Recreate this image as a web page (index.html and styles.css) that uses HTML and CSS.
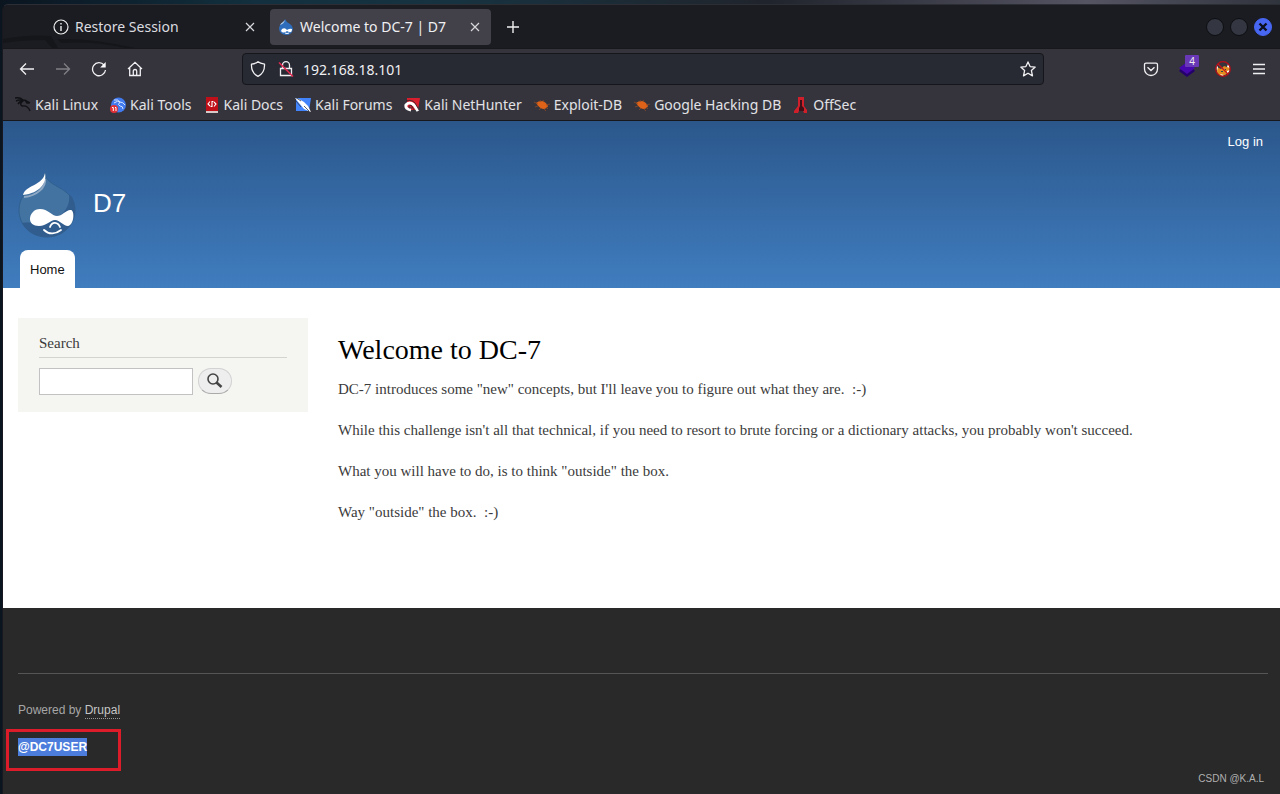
FILE: index.html
```html
<!DOCTYPE html>
<html lang="en">
<head>
<meta charset="utf-8">
<title>Welcome to DC-7 | D7</title>
<link rel="stylesheet" href="styles.css">
</head>
<body>
<svg width="0" height="0" class="defs" aria-hidden="true">
  <symbol id="drop" viewBox="0 0 58 66">
    <path d="M27 0C28 10 39 12 48 19C55 25 57 31 57 37C57 53 44 64 29 64C13 64 1 52 1 37C1 25 8 18 17 13C23 9 26 5 27 0Z" fill="#4373a1" stroke="#31608f"/>
    <path d="M51 21C53 36 42 46 28 48C18 50 8 49 4 50C9 59 18 64 29 64C44 64 57 53 57 37C57 30 55 24 51 21Z" fill="#315d8e"/>
    <path d="M27 6C28 14 19 23 6 24" fill="none" stroke="#8fa9c5" stroke-width="2"/>
    <path d="M27 0C29 10 22 20 5 22C6 17 12 14 18 11C23 8 26 5 27 0Z" fill="#fff"/>
    <path d="M22 36C30 36 34 43 39 43C44 43 49 36 53 37C57 38 56 52 50 53C45 53 42 47 37 47C32 47 29 53 21 53C15 53 12 50 12 46C12 41 16 36 22 36Z" fill="#fff"/>
    <path d="M32 54C34 48 40 49 42 54M26 57C31 62 38 61 43 57" fill="none" stroke="#fff" stroke-width="1.800" stroke-linecap="round"/>
  </symbol>
  <symbol id="close" viewBox="0 0 10 10"><path d="M1 1l8 8M9 1L1 9" fill="none" stroke="#d8d8dc" stroke-width="1.2"/></symbol>
  <symbol id="dragon" viewBox="0 0 16 16"><path d="M0 1Q5 0 8 3Q11 3 13 5L15 6M1 4Q5 2 8 4M3 7Q5 4 8 4Q4 7 7 9Q13 8 15 14M10 3L12 6L14 6" fill="none" stroke="currentColor" stroke-width="1.400"/></symbol>
  <symbol id="bug" viewBox="0 0 16 16"><path d="M2 6Q4 4 8 4Q12 5 14 9Q13 12 9 12Q5 11 2 6Z" fill="#df6219"/><path d="M4 7L0 5M4 9L1 10M7 5L6 3M10 5L9 3M7 11L5 13M10 12L12 14M12 8L16 7M12 10L14 12" stroke="#8c4a25" stroke-width=".8"/></symbol>
</svg>
<div class="desktop">
<div class="window">
  <div class="tabs">
    <svg class="emblem" width="150" height="14" viewBox="0 0 150 14" aria-hidden="true"><path d="M0 5Q25 0 48 2L55 14H49L42 6Q20 6 0 9ZM54 5Q90 4 132 14H122Q90 7 58 9Z" fill="#15161a"/></svg>
    <div class="tab">
      <svg width="16" height="16" viewBox="0 0 16 16"><circle cx="8" cy="8" r="7" fill="none" stroke="#eee" stroke-width="1.2"/><path d="M8 7v5M8 4v1.6" stroke="#eee" stroke-width="1.4"/></svg>
      <span class="tab-name">Restore Session</span>
      <button class="icon-btn small" aria-label="Close Restore Session"><svg width="10" height="10"><use href="#close"/></svg></button>
    </div>
    <div class="tab active">
      <svg width="16" height="16" viewBox="0 0 16 16"><path d="M7 0Q8 3 12 5Q15 7 15 10Q14 16 8 16Q1 15 1 9Q1 6 4 4Q7 2 7 0Z" fill="#2d6dbc"/><path d="M7 1Q6 5 2 6Q3 4 5 3Z" fill="#b5d4ef"/><path d="M4 10Q7 8 9 11Q12 9 14 10Q14 14 11 13L9 12Q5 15 3 12Z" fill="#fff"/><path d="M7 14Q9 15 11 14" stroke="#fff" fill="none"/></svg>
      <span class="tab-name">Welcome to DC-7 | D7</span>
      <button class="icon-btn small" aria-label="Close Welcome to DC-7"><svg width="10" height="10"><use href="#close"/></svg></button>
    </div>
    <button class="icon-btn" aria-label="New tab"><svg width="14" height="14" viewBox="0 0 14 14"><path d="M7 1v12M1 7h12" stroke="#f0f0f0" stroke-width="1.4"/></svg></button>
    <div class="controls">
      <button class="dot" aria-label="Minimize"></button>
      <button class="dot" aria-label="Maximize"></button>
      <button class="dot quit" aria-label="Close window"><svg width="10" height="10" viewBox="0 0 10 10"><path d="M1.500 1.500l7 7M8.500 1.500l-7 7" stroke="#0c0f1c" stroke-width="2.400"/></svg></button>
    </div>
  </div>
  <div class="toolbar">
    <div class="nav">
      <button class="icon-btn" aria-label="Back"><svg width="16" height="16" viewBox="0 0 16 16"><path d="M15 8H1.500M7 2.500L1.500 8L7 13.500" class="line"/></svg></button>
      <button class="icon-btn faded" aria-label="Forward"><svg width="16" height="16" viewBox="0 0 16 16"><path d="M1 8h13.500M9 2.500L14.500 8L9 13.500" class="line"/></svg></button>
      <button class="icon-btn" aria-label="Reload"><svg width="16" height="16" viewBox="0 0 16 16"><path d="M13 4A6.500 6.500 0 1 0 14.500 9" class="line"/><path d="M14.700 1v5.500H9.200Z" fill="#fbfbfe"/></svg></button>
      <button class="icon-btn" aria-label="Home"><svg width="16" height="16" viewBox="0 0 16 16"><path d="M1 8L8 1.300L15 8M2.700 7v7.500h10.600V7M6.300 14.500V10q0-1.500 1.700-1.500T9.700 10v4.500" class="line"/></svg></button>
    </div>
    <div class="url">
      <svg width="16" height="16" viewBox="0 0 16 16"><path d="M8 .8Q10 2.500 14.500 3.200Q15 12 8 15.400Q1 12 1.500 3.200Q6 2.500 8 .8Z" class="line"/></svg>
      <svg class="lock" width="16" height="16" viewBox="0 0 16 16"><path d="M4.500 7V4.200a3.500 3.500 0 0 1 7 0V7M2.500 7.500h11v7h-11Z" class="line"/><path d="M1 1.500l14 14" stroke="#e22850" stroke-width="1.500"/></svg>
      <input type="text" aria-label="Address" value="192.168.18.101">
      <button class="icon-btn" aria-label="Bookmark this page"><svg width="16" height="16" viewBox="0 0 16 16"><path d="M8 .9l2.100 4.700 5.100.5-3.800 3.500 1.100 5.300L8 12.200l-4.500 2.700 1.100-5.300L.8 6.100l5.100-.5Z" class="line" stroke-linejoin="round"/></svg></button>
    </div>
    <div class="tools">
      <button class="icon-btn" aria-label="Pocket"><svg width="16" height="16" viewBox="0 0 16 16"><path d="M3 2.200h10q1.500 0 1.500 1.500V8A6.500 6.500 0 0 1 1.500 8V3.700q0-1.500 1.500-1.500ZM4.500 6.200L8 9.500l3.500-3.300" class="line"/></svg></button>
      <button class="icon-btn" aria-label="Wappalyzer, 4"><svg width="16" height="16" viewBox="0 0 16 16"><path d="M0 10l8 6 8-6-2-2H2Z" fill="#25006b"/><path d="M8 1l8 6-8 6-8-6Z" fill="#4608ad"/></svg><span class="badge">4</span></button>
      <button class="icon-btn" aria-label="FoxyProxy"><svg width="16" height="16" viewBox="0 0 16 16"><path d="M2 6l4 2 3-3 3 1 3 0-1 5-4 3-5 1-3-4Z" fill="#e28b1e"/><path d="M1 4l2 2-1 4zM13 3l2 4-3-1zM5 13l4 1-2 1zM12 10l3-1-3 4z" fill="#fff"/><path d="M6 10h2v1H6zM10 8h1v1h-1z" fill="#304650"/><circle cx="8" cy="8" r="7.300" fill="none" stroke="#b80d19" stroke-width="1.200"/><path d="M3 3l10 10" stroke="#c9141d" stroke-width="1.200"/></svg></button>
      <button class="icon-btn" aria-label="Menu"><svg width="16" height="16" viewBox="0 0 16 16"><path d="M2 3.500h12M2 8h12M2 12.500h12" class="line"/></svg></button>
    </div>
  </div>
  <nav class="bookmarks" aria-label="Bookmarks">
    <a href="#"><svg class="black" width="16" height="16"><use href="#dragon"/></svg>Kali Linux</a>
    <a href="#"><svg width="16" height="16" viewBox="0 0 16 16"><circle cx="8.500" cy="8" r="7.500" fill="#4179ee"/><path d="M4 3Q8 2 10 5Q13 5 15 8M4 6Q8 3 10 5Q7 8 10 9Q13 9 13 12" fill="none" stroke="#d5e5ff"/><circle cx="4" cy="12" r="4" fill="#df3037"/><path d="M2 10.500h1.300v3.500M5 10.500h1v3.500" fill="none" stroke="#fff"/></svg>Kali Tools</a>
    <a href="#"><svg width="16" height="16" viewBox="0 0 16 16"><path d="M2 0h12v14H2Z" fill="#bf1019"/><path d="M2 14h12v2H2Z" fill="#d8c9c9"/><path d="M6 4.500L4 7l2 2M10 5l2 2-2 2.500M9.500 4.500H8v2.500v2.500H6.500" fill="none" stroke="#fff" stroke-width="1.100"/></svg>Kali Docs</a>
    <a href="#"><svg width="16" height="16" viewBox="0 0 16 16"><path d="M1 1h15l-2 13H1Z" fill="#4284fb"/><path d="M0 1l4 1 5 3 4 4 3 6-7-3-5-6Z" fill="#fff"/><path d="M0 0l6 4M9 9l5 5M1 4l5 6" stroke="#30394c" stroke-width=".8"/></svg>Kali Forums</a>
    <a href="#"><svg width="16" height="16" viewBox="0 0 16 16"><path d="M3 1h13l-2 12H3Z" fill="#d91f2d"/><path d="M14 14L10 8Q5 4 2 8Q1 12 7 13" fill="none" stroke="#fff" stroke-width="3"/><path d="M2 4Q8 2 11 6l4 7M8 11L5 11Q4 9 7 8l3 5" fill="none" stroke="#27252b" stroke-width=".8"/></svg>Kali NetHunter</a>
    <a href="#"><svg width="16" height="16"><use href="#bug"/></svg>Exploit-DB</a>
    <a href="#"><svg width="16" height="16"><use href="#bug"/></svg>Google Hacking DB</a>
    <a href="#"><svg width="16" height="16" viewBox="0 0 16 16"><path d="M5 0h6v9l3 4v3h-3l-1-2H6l-1 2H1v-2l4-5Z" fill="#cf1f2b"/><path d="M7 3h2v6l2 2v3H6v-3l1-2Z" fill="#3e1118"/></svg>OffSec</a>
  </nav>
  <div class="page">
    <header class="header">
      <a class="login" href="#">Log in</a>
      <div class="brand">
        <svg width="58" height="66" aria-label="Drupal"><use href="#drop"/></svg>
        <a href="#">D7</a>
      </div>
      <nav class="menu"><a href="#">Home</a></nav>
    </header>
    <div class="main">
      <aside class="sidebar">
        <h2><label for="q">Search</label></h2>
        <form class="search">
          <input id="q" type="search">
          <button type="button" aria-label="Search"><svg width="16" height="16" viewBox="0 0 16 16"><circle cx="6" cy="6" r="5" fill="none" stroke="#444" stroke-width="1.600"/><path d="M9.500 9.500L14.500 14" stroke="#444" stroke-width="2.600"/></svg></button>
        </form>
      </aside>
      <main class="content">
        <h1>Welcome to DC-7</h1>
        <p>DC-7 introduces some "new" concepts, but I'll leave you to figure out what they are.&nbsp; :-)</p>
        <p>While this challenge isn't all that technical, if you need to resort to brute forcing or a dictionary attacks, you probably won't succeed.</p>
        <p>What you will have to do, is to think "outside" the box.</p>
        <p>Way "outside" the box.&nbsp; :-)</p>
      </main>
    </div>
    <footer class="footer">
      <p class="powered">Powered by <a href="#">Drupal</a></p>
      <div class="user"><span class="selected">@DC7USER</span><i class="frame"></i></div>
      <span class="credit">CSDN @K.A.L</span>
    </footer>
  </div>
</div>
</div>
</body>
</html>
```
FILE: styles.css
```css
* { box-sizing: border-box; }
body { margin: 0; }
h1, h2, p { margin: 0; font-weight: normal; }
button, input { font: inherit; color: inherit; }
svg { display: block; flex: none; }
.defs { position: absolute; }

.desktop {
  min-height: 100vh;
  display: flex;
  padding: 4px 0 0 2px;
  background: linear-gradient(90deg, #0a1520 0, #12303f 20%, #173341 35%, #20242c 60%, #555463 85%, #30343d 100%);
}
.window {
  flex: 1;
  min-width: 0;
  display: flex;
  flex-direction: column;
  border-top: 1px solid #2c2e35;
  border-left: 1px solid #171820;
  border-top-left-radius: 6px;
  overflow: hidden;
  background: #1c1b22;
}

/* Browser frame */
.tabs, .toolbar, .bookmarks {
  display: flex;
  align-items: center;
  color: #f0f0f3;
  font-family: "Noto Sans", sans-serif;
  font-size: 14px;
}
.tabs {
  position: relative;
  height: 44px;
  padding: 0 8px 0 37px;
  background: #1b1c21;
  border-bottom: 1px solid #17181b;
}
.emblem { position: absolute; left: 0; bottom: 0; }
.tab {
  position: relative;
  display: flex;
  align-items: center;
  gap: 6px;
  width: 230px;
  height: 36px;
  padding: 0 12px 0 13px;
  color: #dcdce0;
}
.tab.active {
  width: 221px;
  padding: 0 8px;
  border-radius: 4px;
  background: #42414a;
  color: #f0f0f3;
}
.tab-name { flex: 1; white-space: nowrap; }
.icon-btn {
  position: relative;
  display: grid;
  place-items: center;
  width: 36px;
  height: 32px;
  padding: 0;
  border: 0;
  background: none;
}
.icon-btn.small { width: 16px; height: 16px; }
.tabs > .icon-btn { margin-left: 4px; }
.faded { opacity: .4; }
.line { fill: none; stroke: #f0f0f3; stroke-width: 1.3; }
.controls { display: flex; gap: 6px; margin-left: auto; }
.dot {
  display: grid;
  place-items: center;
  width: 18px;
  height: 18px;
  padding: 0;
  border: 1px solid #0d0e11;
  border-radius: 50%;
  background: #343742;
}
.dot.quit { border-color: #4766f2; background: #4766f2; }

.toolbar {
  justify-content: space-between;
  height: 40px;
  padding: 0 3px 0 6px;
  background: #35343c;
}
.nav, .tools { display: flex; }
.url {
  display: flex;
  align-items: center;
  flex: 0 1 802px;
  height: 32px;
  padding-left: 7px;
  border: 1px solid #15161b;
  border-radius: 4px;
  background: #282a33;
}
.url input {
  flex: 1;
  min-width: 0;
  padding: 0;
  border: 0;
  background: none;
  outline: 0;
}
.url .icon-btn { width: 30px; }
.lock { margin: 0 9px 0 12px; }
.badge {
  position: absolute;
  top: 2px;
  right: 6px;
  padding: 0 4px;
  border-radius: 1px;
  background: #6938b6;
  color: #eee;
  font-size: 10px;
  line-height: 12px;
}
.bookmarks {
  gap: 12px;
  height: 32px;
  padding-left: 12px;
  border-bottom: 1px solid #17181b;
  background: #35343c;
  color: #e2e2e6;
}
.bookmarks a {
  display: flex;
  align-items: center;
  gap: 4px;
  color: inherit;
  text-decoration: none;
  white-space: nowrap;
}
.bookmarks .black { color: #101114; }

/* Site */
.page {
  flex: 1;
  display: flex;
  flex-direction: column;
  background: #fff;
  color: #3b3b3b;
  font-family: "Liberation Serif", serif;
  font-size: 15px;
}
.header {
  display: flex;
  flex-direction: column;
  padding: 12px 17px 0 15px;
  background: linear-gradient(#2b578b, #407dbf);
  font-family: "Liberation Sans", sans-serif;
  font-size: 13px;
}
.header a { color: #fff; text-decoration: none; }
.login { align-self: flex-end; line-height: 17px; }
.brand {
  display: flex;
  align-items: center;
  gap: 17px;
  padding: 23px 0 11px;
  font-size: 26px;
}
.brand a { line-height: 30px; padding-bottom: 6px; }
.header .menu a {
  display: inline-block;
  margin-left: 2px;
  padding: 1px 10px 0;
  border-radius: 8px 8px 0 0;
  background: #fff;
  color: #111;
  line-height: 37px;
  vertical-align: top;
}
.main {
  display: flex;
  align-items: flex-start;
  gap: 30px;
  min-height: 320px;
  padding: 30px 15px;
}
.sidebar {
  flex: 0 0 290px;
  padding: 15px 21px 17px;
  background: #f5f5f2;
}
.sidebar h2 {
  padding-bottom: 4px;
  border-bottom: 1px solid #d3d3cf;
  font-size: 15px;
  line-height: 20px;
}
.search { display: flex; gap: 5px; margin-top: 10px; }
.search input {
  width: 154px;
  height: 27px;
  border: 1px solid #c2c2c2;
  border-radius: 0;
  background: #fff;
}
.search button {
  display: grid;
  place-items: center;
  width: 34px;
  height: 26px;
  padding: 0;
  border: 1px solid #d2d2d2;
  border-bottom-color: #aaa;
  border-radius: 13px;
  background: #eee;
}
.content { flex: 1; padding-top: 15px; }
.content h1 {
  margin-bottom: 12px;
  color: #000;
  font-size: 28px;
  line-height: 34px;
}
.content p { line-height: 21px; }
.content p + p { margin-top: 20px; }
.footer {
  position: relative;
  flex: 1;
  padding: 65px 12px 20px 15px;
  background: #292929;
  color: #a6a6a6;
  font-family: "Liberation Sans", sans-serif;
  font-size: 12px;
}
.powered { padding-top: 27px; border-top: 1px solid #555; line-height: 18px; }
.powered a { color: #c6c6c6; text-decoration: none; border-bottom: 1px dotted #999; padding-bottom: 1px; }
.user { position: relative; width: max-content; margin-top: 18px; line-height: 20px; }
.selected { padding: 2px 0; background: #4c7ddc; color: #fff; font-weight: bold; }
.frame { position: absolute; inset: -8px -34px -14px -12px; border: 3px solid #dc1d29; }
.credit { position: absolute; right: 16px; bottom: 8px; font-size: 10px; line-height: 14px; color: #b0b0b0; }
```
